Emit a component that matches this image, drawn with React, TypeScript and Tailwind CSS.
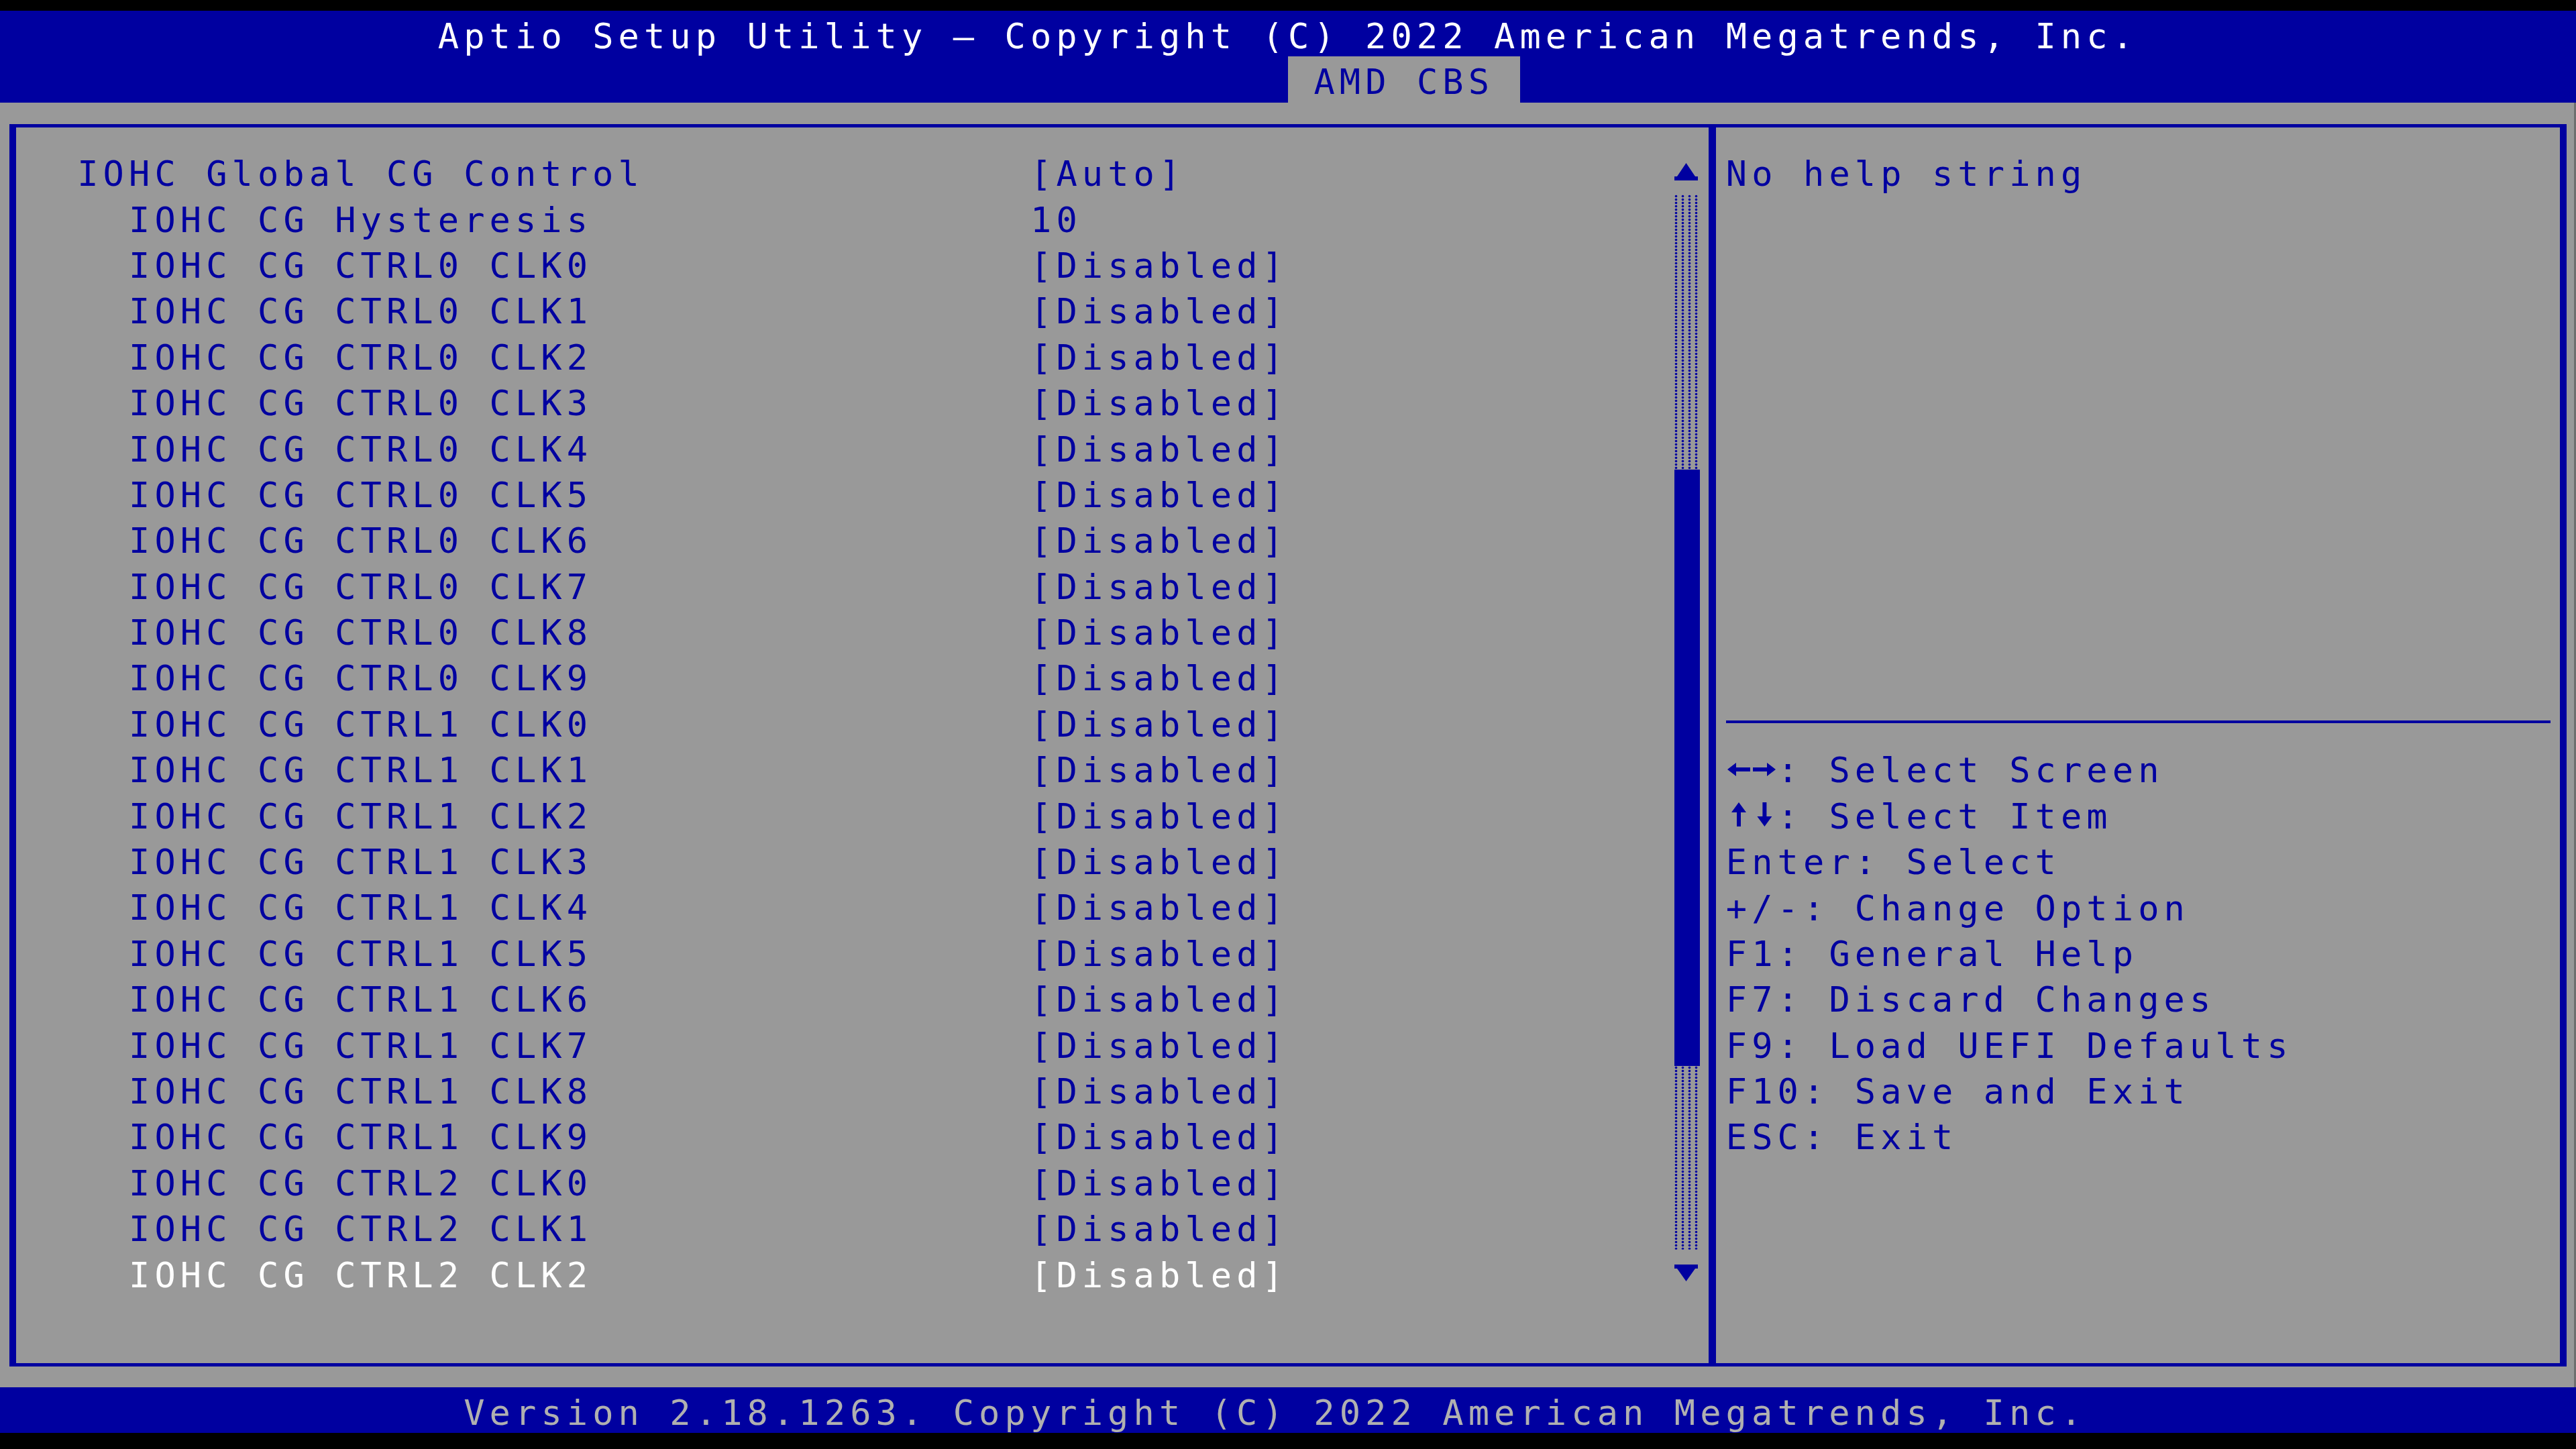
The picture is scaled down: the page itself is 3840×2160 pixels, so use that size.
import React from "react";

// 100 x 31 text screen: one cell is 38.4px wide and 68.4px tall
type Item = { label: string; value: string; indent: "top" | "sub"; active?: boolean };

const ctrlRows = (ctrl: number, count: number): Item[] =>
  Array.from({ length: count }, (_, i) => ({
    label: `IOHC CG CTRL${ctrl} CLK${i}`,
    value: "[Disabled]",
    indent: "sub" as const,
  }));

const items: Item[] = [
  { label: "IOHC Global CG Control", value: "[Auto]", indent: "top" },
  { label: "IOHC CG Hysteresis", value: "10", indent: "sub" },
  ...ctrlRows(0, 10),
  ...ctrlRows(1, 10),
  ...ctrlRows(2, 3),
];
items[items.length - 1].active = true;

// two-cell arrow glyphs of the firmware font
function LeftRight() {
  return (
    <svg width="76.8" height="60" className="inline-block align-top" fill="#0000a0">
      <path d="M2 29 L15 19 L15 26 L36 26 L36 32 L15 32 L15 39 Z" />
      <path d="M74 29 L61 19 L61 26 L40 26 L40 32 L61 32 L61 39 Z" />
    </svg>
  );
}

function UpDown() {
  return (
    <svg width="76.8" height="60" className="inline-block align-top" fill="#0000a0">
      <path d="M19 9 L30 24 L22 24 L22 45 L16 45 L16 24 L8 24 Z" />
      <path d="M57.4 45 L46.4 30 L54.4 30 L54.4 9 L60.4 9 L60.4 30 L68.4 30 Z" />
    </svg>
  );
}

const keyHelp: [React.ReactNode, string][] = [
  [<LeftRight />, ": Select Screen"],
  [<UpDown />, ": Select Item"],
  [null, "Enter: Select"],
  [null, "+/-: Change Option"],
  [null, "F1: General Help"],
  [null, "F7: Discard Changes"],
  [null, "F9: Load UEFI Defaults"],
  [null, "F10: Save and Exit"],
  [null, "ESC: Exit"],
];

function Shade({ rows }: { rows: number }) {
  const h = rows * 68.4;
  return (
    <svg width="38.4" height={h} className="block">
      <defs>
        <pattern id={`shade-${rows}`} width="10" height="5" patternUnits="userSpaceOnUse">
          <circle cx="2.5" cy="2.5" r="1.8" fill="#0000a0" />
        </pattern>
      </defs>
      <rect x="0" y="0" width="36" height={h} fill={`url(#shade-${rows})`} />
    </svg>
  );
}

function ScrollBar() {
  return (
    <div className="w-[38.4px] flex flex-col pt-[31.2px]">
      <svg width="38.4" height="68.4" className="block">
        <path d="M17.5 22 L31 42 L35 42 L35 48 L0 48 L0 42 L4 42 Z" fill="#0000a0" />
      </svg>
      <Shade rows={6} />
      <div className="h-[889.2px] w-[38.4px] bg-[#0000a0]" />
      <Shade rows={4} />
      <svg width="38.4" height="68.4" className="block">
        <path d="M0 22 L35 22 L35 28 L31 28 L17.5 47 L4 28 L0 28 Z" fill="#0000a0" />
      </svg>
    </div>
  );
}

function Row({ children, className = "" }: { children?: React.ReactNode; className?: string }) {
  return <div className={`h-[68.4px] pt-[8px] leading-[60px] whitespace-pre ${className}`}>{children}</div>;
}

export default function App() {
  return (
    <div className="w-[3840px] h-[2160px] bg-black pt-[16px] flex flex-col overflow-hidden font-['DejaVu_Sans_Mono','Liberation_Mono',monospace] text-[52px] tracking-[7.09px]">
      <header className="bg-[#0000a0] flex flex-col">
        <Row className="pl-[652.8px] text-white">
          Aptio Setup Utility – Copyright (C) 2022 American Megatrends, Inc.
        </Row>
        <div className="h-[68.4px] pl-[1920px]">
          <Row className="w-[345.6px] bg-[#999999] pl-[38.4px] text-[#0000a0]">AMD CBS</Row>
        </div>
      </header>

      <main className="h-[1915.2px] bg-[#999999] pt-[32.2px] pl-[14px] border-r-[3px] border-r-[#6e6e6e]">
        <div className="w-[3812px] h-[1852px] flex border-[#0000a0] border-t-[5px] border-b-[5px] border-l-[10px] border-r-[10px]">
          <section className="w-[2523px] flex">
            <div className="w-[2472px] pt-[31.2px]">
              {items.map((it) => (
                <Row
                  key={it.label}
                  className={`flex ${it.active ? "text-white" : "text-[#0000a0]"}`}
                >
                  <span className={`w-[1512px] ${it.indent === "top" ? "pl-[91.2px]" : "pl-[168px]"}`}>
                    {it.label}
                  </span>
                  <span>{it.value}</span>
                </Row>
              ))}
            </div>
            <ScrollBar />
          </section>

          <div className="w-[11px] bg-[#0000a0]" />

          <aside className="w-[1258px] pt-[31.2px] pl-[14.8px] text-[#0000a0]">
            <Row>No help string</Row>
            <div className="h-[752.4px]" />
            <div className="h-[68.4px] flex items-center">
              <div className="w-[1228.8px] h-[4px] bg-[#0000a0]" />
            </div>
            {keyHelp.map(([arrows, text]) => (
              <Row key={text}>
                {arrows}
                {text}
              </Row>
            ))}
          </aside>
        </div>
      </main>

      <footer className="bg-[#0000a0]">
        <Row className="pl-[691.2px] text-[#b0b0b0]">
          Version 2.18.1263. Copyright (C) 2022 American Megatrends, Inc.
        </Row>
      </footer>
    </div>
  );
}
